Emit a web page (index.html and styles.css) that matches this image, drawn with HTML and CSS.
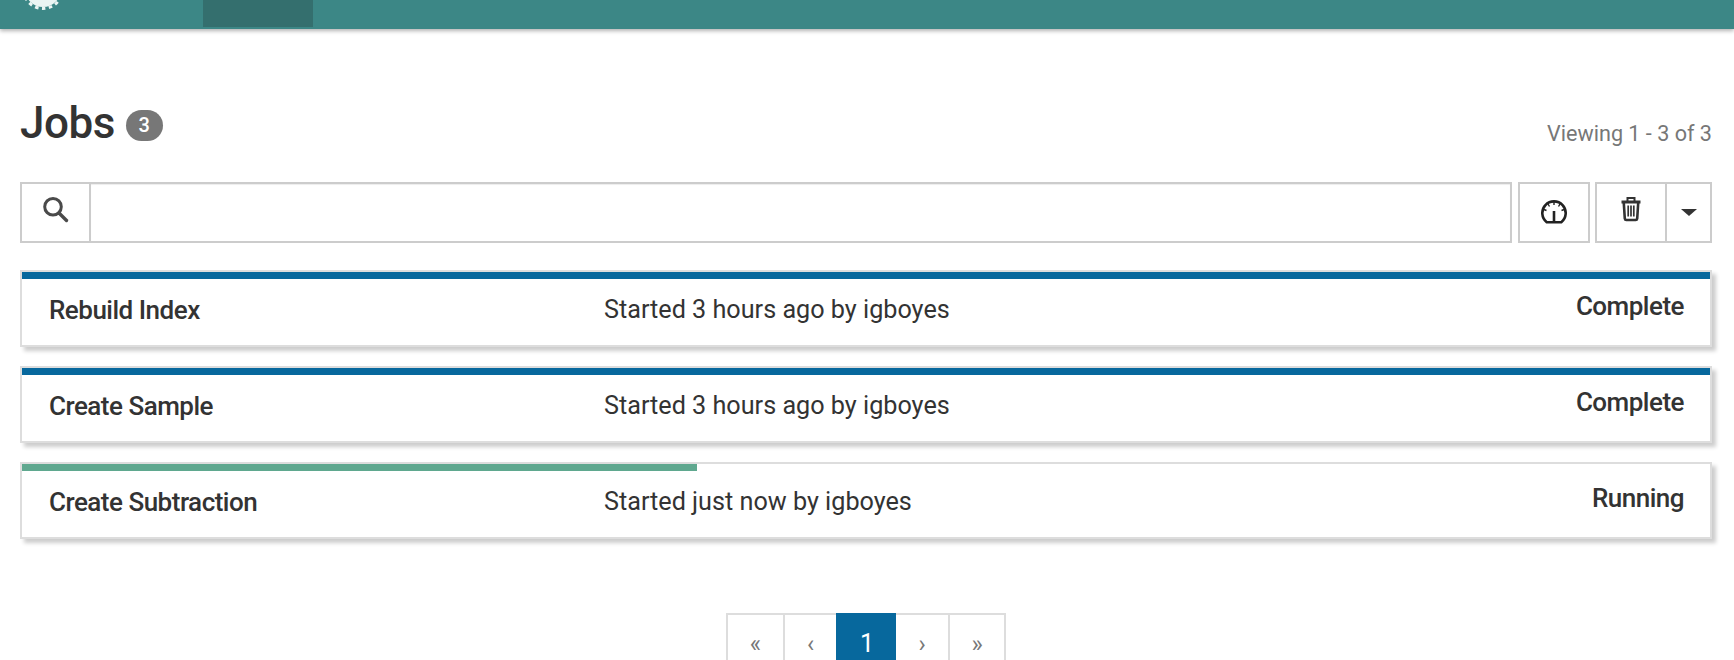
FILE: index.html
```html
<!DOCTYPE html>
<html lang="en">
<head>
  <meta charset="UTF-8" />
  <meta name="viewport" content="width=device-width, initial-scale=1.0" />
  <title>Jobs</title>
  <link rel="stylesheet" href="styles.css">
</head>
<body>
  <nav class="topbar">
    <svg class="logo" width="44" height="44" viewBox="0 0 44 44">
      <circle cx="22" cy="22" r="18" fill="#eaf5f3" />
      <circle cx="22" cy="22" r="19.5" fill="none" stroke="#eaf5f3" stroke-width="3" stroke-dasharray="3.5 3.5" />
    </svg>
    <div class="nav-active"></div>
  </nav>

  <main class="content">
    <div class="title-row">
      <h1 class="title">Jobs <span class="badge">3</span></h1>
      <span class="viewing">Viewing 1 - 3 of 3</span>
    </div>

    <div class="toolbar">
      <div class="search">
        <div class="search-icon">
          <svg width="26" height="26" viewBox="0 0 26 26" fill="none" stroke="#4a4a4a" stroke-width="3">
            <circle cx="10" cy="9.800" r="8.300" />
            <path d="M16 16l7.500 7.500" stroke-linecap="round" stroke-width="3.400" />
          </svg>
        </div>
        <input class="search-input" type="text" />
      </div>
      <button class="btn btn-gauge">
        <svg width="26" height="26" viewBox="0 0 26 26" fill="none" stroke="#222" stroke-width="2">
          <path d="M5.700 22.200A11.700 11.700 0 1 1 20.300 22.200Z" stroke-width="2.600" />
          <path d="M13 22V11" stroke-width="2.600" />
          <path d="M13 2v3M7 4l1.500 2.500M19 4l-1.500 2.500M3 9.500l2.500 1M23 9.500l-2.500 1" stroke-width="1.400" />
        </svg>
      </button>
      <div class="btn-group">
        <button class="btn btn-trash">
          <svg width="20" height="26" viewBox="0 0 20 26" fill="none" stroke="#333" stroke-width="2">
            <path d="M0.500 6h19" stroke-width="3" />
            <path d="M6.500 5V2h7v3" stroke-width="2" />
            <path d="M2.800 7l1 15.500q0.200 1.500 1.500 1.500h9.400q1.300 0 1.500-1.500l1-15.500" stroke-width="2.600" />
            <path d="M7.200 9.500v11M10 9.500v11M12.800 9.500v11" stroke-width="1.700" />
          </svg>
        </button>
        <button class="btn btn-caret"><span class="caret"></span></button>
      </div>
    </div>

    <div class="job-list">
      <div class="job">
        <div class="bar bar-done"></div>
        <div class="job-row">
          <span class="job-name">Rebuild Index</span>
          <span class="job-info">Started 3 hours ago by igboyes</span>
          <span class="job-state">Complete</span>
        </div>
      </div>
      <div class="job">
        <div class="bar bar-done"></div>
        <div class="job-row">
          <span class="job-name">Create Sample</span>
          <span class="job-info">Started 3 hours ago by igboyes</span>
          <span class="job-state">Complete</span>
        </div>
      </div>
      <div class="job">
        <div class="bar bar-running" style="width: 40%"></div>
        <div class="job-row">
          <span class="job-name">Create Subtraction</span>
          <span class="job-info">Started just now by igboyes</span>
          <span class="job-state">Running</span>
        </div>
      </div>
    </div>

    <ul class="pager">
      <li class="page page-first">«</li>
      <li class="page page-prev">‹</li>
      <li class="page page-on">1</li>
      <li class="page page-next">›</li>
      <li class="page page-last">»</li>
    </ul>
  </main>
</body>
</html>
```

FILE: styles.css
```css
html, body {
  height: 660px;
  overflow: hidden;
}
body {
  margin: 0;
  background-color: #fff;
  color: #333;
  font-family: Roboto, "Liberation Sans", sans-serif;
}
.topbar {
  height: 29px;
  background-color: #3c8786;
  box-shadow: 0 2px 4px rgba(0, 0, 0, 0.3);
  display: flex;
  overflow: hidden;
}
.logo {
  margin: -33px 0 0 21px;
}
.nav-active {
  width: 110px;
  height: 27px;
  margin-left: 138px;
  background-color: #346f6e;
}
.content {
  padding: 0 22px 0 20px;
}
.title-row {
  display: flex;
  justify-content: space-between;
  align-items: flex-end;
  height: 50px;
  padding: 69px 0 34px;
}
.title {
  margin: 0;
  font-size: 44px;
  font-weight: 500;
  line-height: 50px;
  letter-spacing: -0.5px;
  display: flex;
  align-items: center;
  gap: 11px;
}
.badge {
  display: inline-block;
  width: 37px;
  height: 31px;
  border-radius: 16px;
  background-color: #777;
  color: #fff;
  font-size: 20px;
  font-weight: 500;
  line-height: 31px;
  text-align: center;
  letter-spacing: 0;
  margin-top: 4px;
}
.viewing {
  font-size: 21.6px;
  line-height: 24px;
  color: #777;
  padding-bottom: 2px;
}
.toolbar {
  display: flex;
  height: 61px;
}
.search {
  flex: 1;
  display: flex;
  border: 2px solid #ccc;
}
.search-icon {
  width: 67px;
  border-right: 2px solid #ccc;
  display: flex;
  align-items: flex-start;
  justify-content: center;
  padding-top: 13px;
}
.search-input {
  flex: 1;
  border: 0;
  outline: 0;
  box-shadow: inset 0 1px 1px rgba(0, 0, 0, 0.075);
}
.btn {
  height: 61px;
  background-color: #fff;
  border: 2px solid #ccc;
  padding: 0;
  display: flex;
  align-items: center;
  justify-content: center;
}
.btn-gauge {
  width: 72px;
  margin-left: 6px;
}
.btn-group {
  display: flex;
  margin-left: 5px;
}
.btn-trash {
  width: 72px;
  align-items: flex-start;
  padding-top: 12px;
}
.btn-caret {
  width: 45px;
  border-left: 0;
}
.caret {
  border-top: 7px solid #333;
  border-left: 8px solid transparent;
  border-right: 8px solid transparent;
}
.job-list {
  margin-top: 27px;
}
.job {
  height: 73px;
  margin-bottom: 19px;
  border: 2px solid #ddd;
  box-shadow: 4px 4px 4px rgba(0, 0, 0, 0.2);
}
.bar {
  height: 7px;
}
.bar-done {
  background-color: #07689d;
}
.bar-running {
  background-color: #5fa88f;
}
.job-row {
  display: flex;
  align-items: flex-start;
  padding: 0 26px 0 27px;
}
.job-name {
  width: 555px;
  font-size: 26px;
  font-weight: 500;
  line-height: 30px;
  letter-spacing: -0.5px;
  padding-top: 16px;
}
.job-info {
  flex: 1;
  font-size: 25.2px;
  line-height: 30px;
  padding-top: 16px;
}
.job-state {
  font-size: 26px;
  font-weight: 500;
  line-height: 30px;
  letter-spacing: -0.5px;
  padding-top: 12px;
}
.pager {
  list-style: none;
  display: flex;
  justify-content: center;
  margin: 74px 0 0;
  padding: 0;
}
.page {
  height: 60px;
  border: 2px solid #ddd;
  border-right: 0;
  color: #777;
  font-size: 24px;
  text-align: center;
  line-height: 58px;
  box-sizing: border-box;
}
.page-first {
  width: 57px;
}
.page-prev {
  width: 53px;
}
.page-on {
  width: 60px;
  background-color: #07689d;
  border-color: #07689d;
  color: #fff;
  font-size: 25px;
}
.page-next {
  width: 52px;
  border-left: 0;
}
.page-last {
  width: 58px;
  border-right: 2px solid #ddd;
}
```
